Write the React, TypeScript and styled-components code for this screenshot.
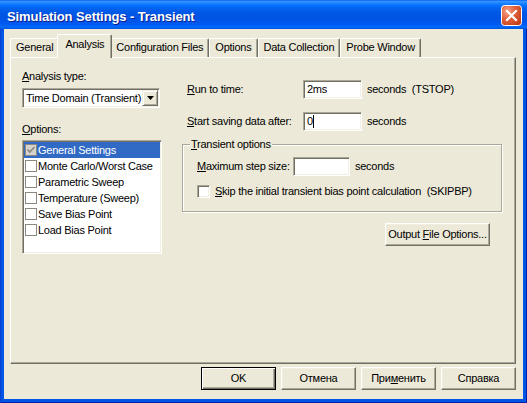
import React from 'react';
import styled, { createGlobalStyle } from 'styled-components';

const FONT = `"Liberation Sans", Arial, sans-serif`;

const Global = createGlobalStyle`
  html, body { margin: 0; padding: 0; width: 527px; height: 403px; overflow: hidden; background: #ECE9D8; }
  #root { width: 527px; height: 403px; }
  * { box-sizing: border-box; }
`;

const Window = styled.div`
  width: 527px;
  height: 403px;
  display: flex;
  flex-direction: column;
  background: #0055E5;
  box-shadow: inset 1px 0 0 #0A3FCF, inset -1px 0 0 #0023A8, inset 0 -1px 0 #0023A8;
  font-family: ${FONT};
  font-size: 11px;
  letter-spacing: -0.25px;
  color: #000;
`;

const TitleBar = styled.div`
  height: 29px;
  flex: none;
  display: flex;
  align-items: flex-start;
  justify-content: space-between;
  padding: 0 5px 0 7px;
  background: linear-gradient(180deg, #0058EE 0%, #3A93FF 4%, #288EFF 8%, #127DFF 14%, #036FFC 20%, #0262EE 30%, #0057E5 45%, #0054E3 60%, #0055EB 75%, #005BF5 85%, #026AFE 92%, #0062EF 96%, #0052D6 100%);
`;

const Title = styled.div`
  margin-top: 9px;
  font: bold 13px ${FONT};
  line-height: 15px;
  letter-spacing: -0.1px;
  color: #fff;
  text-shadow: 1px 1px 0 #0A1E8C;
`;

const CloseBox = styled.div`
  margin-top: 5px;
  width: 21px;
  height: 21px;
  display: flex;
`;

const Client = styled.div`
  flex: 1;
  margin: 0 4px 4px 4px;
  background: #ECE9D8;
  display: flex;
  flex-direction: column;
  padding: 5px 7px 9px 6px;
`;

const TabStrip = styled.div`
  height: 23px;
  flex: none;
  display: flex;
  align-items: flex-end;
`;

const Tab = styled.div<{ $active?: boolean }>`
  position: relative;
  z-index: ${p => (p.$active ? 2 : 1)};
  height: ${p => (p.$active ? 24 : 19)}px;
  margin: ${p => (p.$active ? '0 -2px -1px' : '0')};
  padding: ${p => (p.$active ? '3px 7px 0' : '2px 5px 0')};
  line-height: 13px;
  white-space: nowrap;
  background: #ECE9D8;
  border-top: 1px solid #fff;
  border-left: 1px solid #fff;
  border-right: 1px solid #716F64;
  border-radius: 2px 2px 0 0;
  box-shadow: inset -1px 0 0 #ACA899;
`;

const Panel = styled.div`
  height: 307px;
  flex: none;
  display: flex;
  align-items: flex-start;
  border-top: 1px solid #fff;
  border-left: 1px solid #fff;
  border-right: 1px solid #716F64;
  border-bottom: 1px solid #716F64;
  box-shadow: inset -1px -1px 0 #ACA899;
  padding: 12px 0 0 11px;
`;

const LeftCol = styled.div`
  width: 140px;
  flex: none;
  display: flex;
  flex-direction: column;
`;

const Label = styled.div<{ $gap?: number }>`
  line-height: 13px;
  white-space: pre;
  margin-top: ${p => p.$gap ?? 0}px;
`;

const Sunken = styled.div`
  background: #fff;
  border: 1px solid;
  border-color: #ACA899 #fff #fff #ACA899;
  box-shadow: inset 1px 1px 0 #716F64, inset -1px -1px 0 #F1EFE2;
`;

const Combo = styled(Sunken)`
  margin-top: 5px;
  width: 138px;
  height: 20px;
  display: flex;
  align-items: center;
  justify-content: space-between;
  padding: 0 1px 0 3px;
  line-height: 13px;
  white-space: nowrap;
`;

const DropButton = styled.div`
  width: 16px;
  height: 16px;
  flex: none;
  display: flex;
  align-items: center;
  justify-content: center;
  background: #ECE9D8;
  border: 1px solid;
  border-color: #F1EFE2 #716F64 #716F64 #F1EFE2;
  box-shadow: inset 1px 1px 0 #fff, inset -1px -1px 0 #ACA899;
`;

const ListBox = styled(Sunken)`
  margin-top: 4px;
  width: 140px;
  height: 114px;
  padding: 1px;
  display: flex;
  flex-direction: column;
`;

const ListItem = styled.div<{ $selected?: boolean }>`
  height: 16px;
  display: flex;
  align-items: center;
  gap: 1px;
  padding-left: 1px;
  line-height: 13px;
  white-space: nowrap;
  background: ${p => (p.$selected ? '#316AC5' : 'transparent')};
  color: ${p => (p.$selected ? '#fff' : '#000')};
`;

const ListCheck = styled.div<{ $checked?: boolean }>`
  width: 12px;
  height: 12px;
  flex: none;
  display: flex;
  border: 1px solid #8C8A80;
  background: ${p => (p.$checked ? '#D6D3CE' : '#fff')};
`;

const RightCol = styled.div`
  width: 320px;
  flex: none;
  margin: 10px 0 0 20px;
  display: flex;
  flex-direction: column;
`;

const FormRow = styled.div<{ $gap?: number; $indent?: number }>`
  height: 19px;
  display: flex;
  align-items: center;
  margin-top: ${p => p.$gap ?? 0}px;
  padding-left: ${p => p.$indent ?? 0}px;
  white-space: pre;
`;

const RowLabel = styled.div<{ $w: number }>`
  width: ${p => p.$w}px;
  flex: none;
  line-height: 13px;
`;

const Edit = styled(Sunken)<{ $w: number }>`
  width: ${p => p.$w}px;
  height: 19px;
  flex: none;
  display: flex;
  align-items: center;
  padding-left: 3px;
  line-height: 13px;
`;

const Caret = styled.span`
  display: inline-block;
  width: 1px;
  height: 13px;
  background: #000;
`;

const Unit = styled.div`
  margin-left: 5px;
  line-height: 13px;
`;

const Group = styled.fieldset`
  margin: 7px 0 0 0;
  padding: 0;
  width: 320px;
  border: 1px solid #ACA899;
  box-shadow: 1px 1px 0 #fff, inset 1px 1px 0 #fff;
  min-inline-size: 0;
`;

const Legend = styled.legend`
  margin-left: 7px;
  padding: 0 1px;
  line-height: 13px;
  background: #ECE9D8;
`;

const GroupBody = styled.div`
  padding: 6px 0 13px 14px;
  display: flex;
  flex-direction: column;
`;

const CheckRow = styled.div`
  margin-top: 9px;
  height: 13px;
  display: flex;
  align-items: center;
  gap: 5px;
  white-space: pre;
  line-height: 13px;
`;

const CheckBox = styled.div`
  width: 13px;
  height: 13px;
  flex: none;
  background: #fff;
  border: 1px solid;
  border-color: #ACA899 #fff #fff #ACA899;
  box-shadow: inset 1px 1px 0 #716F64, inset -1px -1px 0 #F1EFE2;
`;

const ButtonBar = styled.div<{ $gap: number; $right?: number }>`
  display: flex;
  justify-content: flex-end;
  gap: 5px;
  margin-top: ${p => p.$gap}px;
  padding-right: ${p => p.$right ?? 0}px;
`;

const Button = styled.div<{ $w: number; $default?: boolean }>`
  width: ${p => p.$w}px;
  height: 23px;
  flex: none;
  display: flex;
  align-items: center;
  justify-content: center;
  line-height: 13px;
  white-space: nowrap;
  background: #ECE9D8;
  border: 1px solid;
  border-color: ${p => (p.$default ? '#000' : '#fff #716F64 #716F64 #fff')};
  box-shadow: ${p =>
    p.$default
      ? 'inset 1px 1px 0 #fff, inset -1px -1px 0 #716F64, inset -2px -2px 0 #ACA899'
      : 'inset -1px -1px 0 #ACA899, inset 1px 1px 0 #F1EFE2'};
`;

const CloseIcon = () => (
  <svg width="21" height="21" viewBox="0 0 21 21">
    <defs>
      <radialGradient id="cg" cx="30%" cy="30%" r="85%">
        <stop offset="0%" stopColor="#F0A38B" />
        <stop offset="45%" stopColor="#E2643F" />
        <stop offset="100%" stopColor="#C23B14" />
      </radialGradient>
    </defs>
    <rect x="0.5" y="0.5" width="20" height="20" rx="3" fill="url(#cg)" stroke="#fff" strokeWidth="1" />
    <path d="M6 6 L15 15 M15 6 L6 15" stroke="#fff" strokeWidth="2.2" strokeLinecap="square" />
  </svg>
);

const DownArrow = () => (
  <svg width="7" height="4" viewBox="0 0 7 4">
    <path d="M0 0 H7 L3.5 4 Z" fill="#000" />
  </svg>
);

const CheckMark = () => (
  <svg width="10" height="10" viewBox="0 0 10 10">
    <polyline points="1.5,4.5 3.8,7 8.5,2" fill="none" stroke="#8C8A80" strokeWidth="1.8" />
  </svg>
);

const tabs = ['General', 'Analysis', 'Configuration Files', 'Options', 'Data Collection', 'Probe Window'];

const options = [
  { label: 'General Settings', checked: true, selected: true },
  { label: 'Monte Carlo/Worst Case' },
  { label: 'Parametric Sweep' },
  { label: 'Temperature (Sweep)' },
  { label: 'Save Bias Point' },
  { label: 'Load Bias Point' },
];

export default function App() {
  return (
    <>
      <Global />
      <Window>
        <TitleBar>
          <Title>Simulation Settings - Transient</Title>
          <CloseBox>
            <CloseIcon />
          </CloseBox>
        </TitleBar>
        <Client>
          <TabStrip>
            {tabs.map(t => (
              <Tab key={t} $active={t === 'Analysis'}>
                {t}
              </Tab>
            ))}
          </TabStrip>
          <Panel>
            <LeftCol>
              <Label>
                <u>A</u>nalysis type:
              </Label>
              <Combo>
                <span>Time Domain (Transient)</span>
                <DropButton>
                  <DownArrow />
                </DropButton>
              </Combo>
              <Label $gap={15}>
                <u>O</u>ptions:
              </Label>
              <ListBox>
                {options.map(o => (
                  <ListItem key={o.label} $selected={o.selected}>
                    <ListCheck $checked={o.checked}>{o.checked && <CheckMark />}</ListCheck>
                    {o.label}
                  </ListItem>
                ))}
              </ListBox>
            </LeftCol>
            <RightCol>
              <FormRow $indent={5}>
                <RowLabel $w={116}>
                  <u>R</u>un to time:
                </RowLabel>
                <Edit $w={59}>2ms</Edit>
                <Unit>seconds  (TSTOP)</Unit>
              </FormRow>
              <FormRow $indent={5} $gap={13}>
                <RowLabel $w={116}>
                  <u>S</u>tart saving data after:
                </RowLabel>
                <Edit $w={59}>
                  0<Caret />
                </Edit>
                <Unit>seconds</Unit>
              </FormRow>
              <Group>
                <Legend>
                  <u>T</u>ransient options
                </Legend>
                <GroupBody>
                  <FormRow>
                    <RowLabel $w={96}>
                      <u>M</u>aximum step size:
                    </RowLabel>
                    <Edit $w={57} />
                    <Unit>seconds</Unit>
                  </FormRow>
                  <CheckRow>
                    <CheckBox />
                    <span>
                      <u>S</u>kip the initial transient bias point calculation  (SKIPBP)
                    </span>
                  </CheckRow>
                </GroupBody>
              </Group>
              <ButtonBar $gap={11} $right={12}>
                <Button $w={105}>
                  Output&nbsp;<u>F</u>ile Options...
                </Button>
              </ButtonBar>
            </RightCol>
          </Panel>
          <ButtonBar $gap={3}>
            <Button $w={75} $default>
              OK
            </Button>
            <Button $w={75}>Отмена</Button>
            <Button $w={75}>
              При<u>м</u>енить
            </Button>
            <Button $w={75}>Справка</Button>
          </ButtonBar>
        </Client>
      </Window>
    </>
  );
}
